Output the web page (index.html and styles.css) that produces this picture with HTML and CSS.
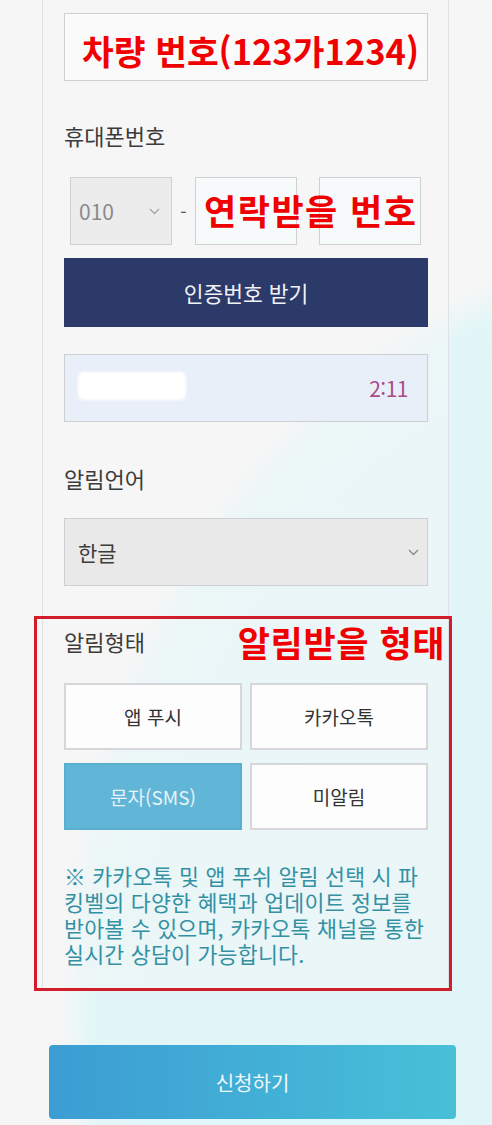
FILE: index.html
```html
<!DOCTYPE html>
<html lang="ko">
<head>
    <meta charset="UTF-8">
    <meta name="viewport" content="width=device-width, initial-scale=1.0">
    <title>파킹벨 알림 신청</title>
    <link rel="stylesheet" href="styles.css">
</head>
<body>
    <div class="card">
        <!-- 차량 번호 -->
        <div class="field car-number">
            <span class="mark">차량 번호(123가1234)</span>
        </div>

        <!-- 휴대폰번호 -->
        <div class="label first">휴대폰번호</div>
        <div class="phone-row">
            <div class="field select small">
                <span class="muted">010</span>
                <svg class="chevron" width="11" height="7" viewBox="0 0 11 7"><polyline points="1,1 5.5,5.5 10,1" fill="none" stroke="#a6a6a6" stroke-width="1.4"/></svg>
            </div>
            <span class="dash">-</span>
            <div class="field small input"></div>
            <span class="spacer"></span>
            <div class="field small input"></div>
            <span class="mark overlay">연락받을 번호</span>
        </div>
        <button class="btn-navy">인증번호 받기</button>

        <div class="field timer">
            <span class="blur"></span>
            <span class="time">2:11</span>
        </div>

        <!-- 알림언어 -->
        <div class="label">알림언어</div>
        <div class="field select lang">
            <span>한글</span>
            <svg class="chevron" width="11" height="7" viewBox="0 0 11 7"><polyline points="1,1 5.5,5.5 10,1" fill="none" stroke="#8a8a8a" stroke-width="1.4"/></svg>
        </div>

        <!-- 알림형태 -->
        <div class="notice-box">
            <div class="label-row">
                <span class="label">알림형태</span>
                <span class="mark">알림받을 형태</span>
            </div>
            <div class="options">
                <button class="opt">앱 푸시</button>
                <button class="opt">카카오톡</button>
                <button class="opt selected">문자(SMS)</button>
                <button class="opt">미알림</button>
            </div>
            <p class="note">※ 카카오톡 및 앱 푸쉬 알림 선택 시 파<br>킹벨의 다양한 혜택과 업데이트 정보를<br>받아볼 수 있으며, 카카오톡 채널을 통한<br>실시간 상담이 가능합니다.</p>
        </div>
    </div>

    <button class="submit">신청하기</button>
</body>
</html>
```

FILE: styles.css
```css
body {
    font-family: "Noto Sans CJK KR", "Noto Sans", sans-serif;
    margin: 0;
    padding: 0;
    min-height: 1125px;
    color: #3a3a3a;
    background-color: #f6f6f6;
    background-image: radial-gradient(ellipse 640px 760px at 700px 1000px, #dff5f7 0, #e2f6f8 95%, rgba(246, 246, 246, 0) 100%);
    overflow: hidden;
}
.card {
    margin-left: 42px;
    width: 364px;
    padding: 13px 20px 0 21px;
    border-left: 1px solid #dde2e6;
    border-right: 1px solid #dde2e6;
    background-color: rgba(247, 247, 247, 0.45);
}
.field {
    box-sizing: border-box;
    height: 68px;
    border: 1px solid #cfd0d2;
    background-color: #fafafa;
    display: flex;
    align-items: center;
}
.mark {
    color: #f00000;
    font-weight: bold;
    font-size: 35px;
    line-height: 30px;
    letter-spacing: 1.5px;
    white-space: nowrap;
}
.car-number {
    padding-left: 17px;
    padding-top: 6px;
}
.car-number .mark {
    font-size: 34.5px;
    letter-spacing: 0;
}
.label {
    font-size: 22px;
    line-height: 30px;
    color: #3c3c3c;
    margin-top: 41px;
    margin-bottom: 25px;
}
.label.first {
    margin-top: 39px;
    margin-bottom: 27px;
}
.phone-row {
    position: relative;
    display: flex;
    align-items: center;
    margin-left: 6px;
}
.field.small {
    width: 102px;
}
.select {
    background-color: #ececec;
    justify-content: space-between;
    padding: 0 11px 0 8px;
    font-size: 21px;
}
.muted {
    color: #8a8a8a;
}
.dash {
    width: 23px;
    text-align: center;
    font-size: 18px;
    color: #555;
}
.spacer {
    width: 22px;
}
.input {
    background-color: #f6fafb;
}
.overlay {
    position: absolute;
    left: 134px;
    top: 18px;
}
.btn-navy {
    display: block;
    width: 100%;
    height: 69px;
    margin-top: 13px;
    border: none;
    background-color: #2c3a6a;
    color: #f2f2f6;
    font-family: inherit;
    font-size: 21.5px;
    padding-bottom: 2px;
}
.timer {
    margin-top: 27px;
    background-color: #e9eff8;
    justify-content: space-between;
    padding: 0 19px 0 15px;
}
.blur {
    width: 104px;
    height: 24px;
    background-color: #fff;
    border-radius: 4px;
    box-shadow: 0 0 3px 2px #fff;
    margin-top: -4px;
}
.time {
    color: #ab4a86;
    font-size: 21px;
    letter-spacing: -0.5px;
}
.lang {
    padding: 0 8px 0 13px;
    background-color: #e9e9e9;
    color: #3c3c3c;
}
.notice-box {
    margin: 30px -24px 0 -30px;
    border: 3px solid #d11c2a;
    padding: 7px 21px 21px 27px;
}
.label-row {
    display: flex;
    justify-content: space-between;
    align-items: center;
    height: 30px;
}
.label-row .label {
    margin: 0;
}
.label-row .mark {
    margin-right: -17px;
    margin-top: 2px;
    letter-spacing: 0.6px;
}
.options {
    display: grid;
    grid-template-columns: 1fr 1fr;
    column-gap: 8px;
    row-gap: 13px;
    margin-top: 27px;
}
.opt {
    height: 67px;
    border: 2px solid #d7d7d9;
    background-color: #fdfdfd;
    color: #333;
    font-family: inherit;
    font-size: 19px;
}
.opt.selected {
    background-color: #61b5d6;
    border-color: #5aafd1;
    color: #e6f3f8;
}
.note {
    margin: 33px 0 0 0;
    font-size: 21.7px;
    line-height: 26px;
    letter-spacing: 0.2px;
    color: #3391a3;
    white-space: nowrap;
}
.submit {
    display: block;
    margin: 54px 0 0 49px;
    width: 407px;
    height: 74px;
    border: none;
    border-radius: 4px;
    background: linear-gradient(to right, #3c9dd3, #48c0d8);
    color: #eef8fb;
    font-family: inherit;
    font-size: 20px;
}
```
